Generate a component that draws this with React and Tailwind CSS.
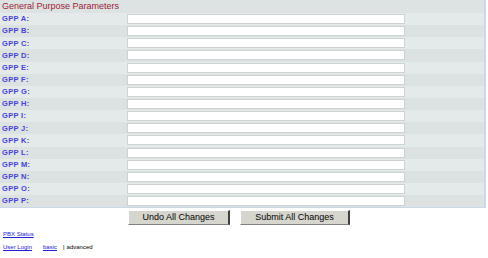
import React from 'react';

const letters = ['A', 'B', 'C', 'D', 'E', 'F', 'G', 'H', 'I', 'J', 'K', 'L', 'M', 'N', 'O', 'P'];

const App = () => {
  return (
    <div className="w-[488px] h-[258px] bg-white overflow-hidden" style={{ fontFamily: '"Liberation Sans", Arial, sans-serif' }}>
      <div className="w-[486px] border-r-2 border-[#c9d9ea] bg-[#dde3e3]">
        {/* header row */}
        <div className="h-[13px] flex items-center pl-[2px] text-[9px] leading-none text-[#9b2238]">
          General Purpose Parameters
        </div>
        {letters.map((l, i) => (
          <div
            key={l}
            className={`h-[12.15px] flex items-center ${i % 2 === 0 ? 'bg-[#e4e9e9]' : 'bg-[#dce2e2]'}`}
          >
            <div className="w-[127px] pl-[2px] text-[7.5px] font-bold leading-none text-[#4444d4] tracking-[0.3px]">
              GPP {l}:
            </div>
            <div className="w-[278px] h-[10px] bg-white border border-[#cdd3d3]" />
            <div className="flex-1" />
          </div>
        ))}
        <div className="h-[1px] bg-[#c9d9ea]" />
      </div>
      <div className="flex gap-[10px] pl-[128px] mt-[2px]">
        <button className="w-[102px] h-[15px] bg-[#d6d6ce] border-r-2 border-b border-r-[#404040] border-b-[#808080] border-t border-l border-t-white border-l-white text-[9px] leading-none text-black">
          Undo All Changes
        </button>
        <button className="w-[110px] h-[15px] bg-[#d6d6ce] border-r-2 border-b border-r-[#404040] border-b-[#808080] border-t border-l border-t-white border-l-white text-[9px] leading-none text-black">
          Submit All Changes
        </button>
      </div>
      <div className="pl-[3px] mt-[6px] text-[6px] leading-none">
        <a className="text-[#2222cc] underline">PBX Status</a>
      </div>
      <div className="pl-[3px] mt-[7px] flex items-center text-[6px] leading-none">
        <a className="text-[#2222cc] underline">User Login</a>
        <a className="ml-[11px] text-[#2222cc] underline">basic</a>
        <span className="ml-[6px] text-black">|</span>
        <span className="ml-[2px] text-black">advanced</span>
      </div>
    </div>
  );
};

export default App;
